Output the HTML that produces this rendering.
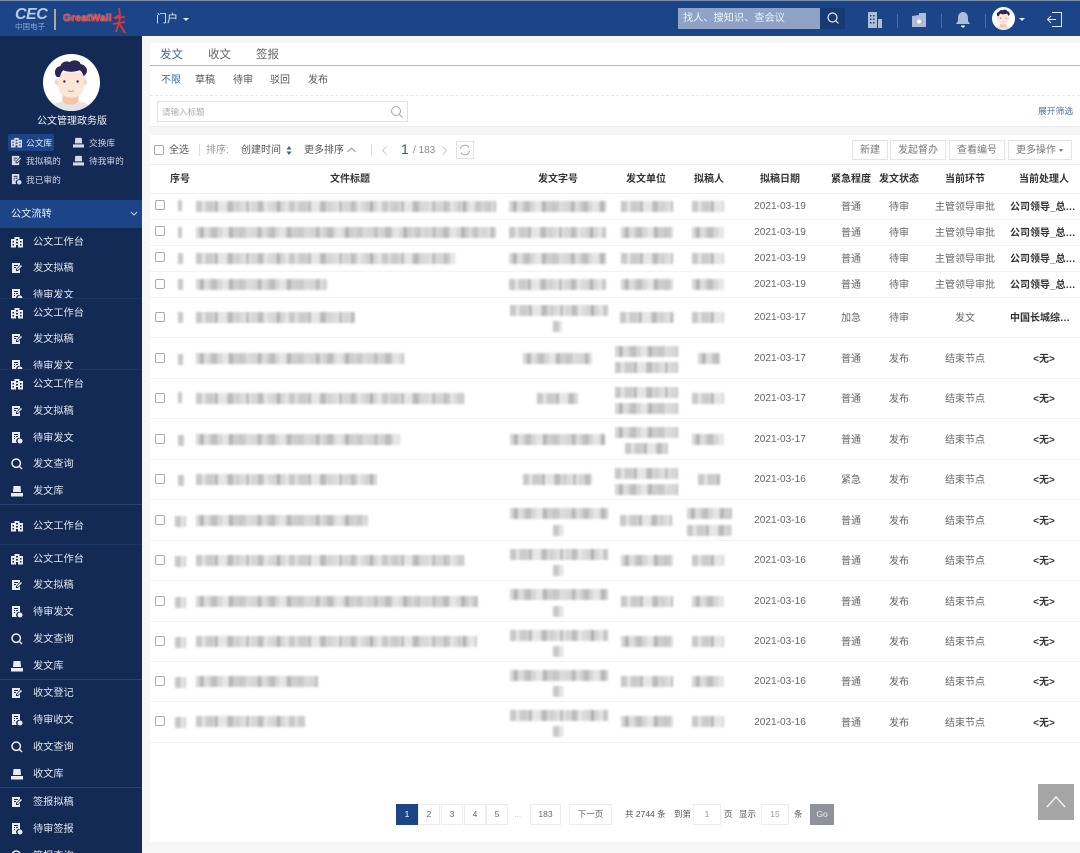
<!DOCTYPE html>
<html lang="zh"><head><meta charset="utf-8"><title>公文管理</title>
<style>
*{box-sizing:border-box}
html,body{margin:0;padding:0}
body{width:1080px;height:853px;position:relative;overflow:hidden;background:#f6f6f6;font-family:"Liberation Sans","Noto Sans CJK SC",sans-serif;font-size:10px;color:#444}
.a{position:absolute;white-space:nowrap}
#hd{position:absolute;left:0;top:0;width:1080px;height:36px;background:#1c4587;border-top:1px solid #7d8fae;z-index:3}
#sb{position:absolute;left:0;top:36px;width:142px;height:817px;background:#132a55;overflow:hidden;color:#e3e8f0}
.sec{position:absolute;left:0;width:142px;overflow:hidden;border-top:1px solid #1a3564}
.it{position:absolute;left:33px;font-size:10.2px;line-height:14px;color:#dfe5ee;white-space:nowrap;margin-top:1px}
.ic{position:absolute;left:11px;width:12px;height:12px;fill:#e9edf3}
.m2 .it{margin-top:2px}
.m2 .ic{margin-top:1px}
.q{position:absolute;font-size:8.7px;line-height:12px;color:#c9d2e0;white-space:nowrap}
.qi{position:absolute;width:11px;height:11px;fill:#d5dbe6}
.pn{position:absolute;background:#fff}
.r{position:absolute;left:150px;width:930px;border-bottom:1px solid #f3f3f3;background:#fff}
.c{position:absolute;top:-1px;bottom:1px;display:flex;align-items:center;justify-content:center;font-size:10px;color:#666;white-space:nowrap}
.d{left:595px;width:70px;font-size:10.1px;top:0;bottom:0}
.u{left:681px;width:40px}
.s{left:729px;width:40px}
.n{left:775px;width:80px}
.p{left:860px;width:70px;justify-content:flex-start;font-weight:bold;color:#333}
.w{left:879px;width:30px;justify-content:center;font-weight:bold;color:#333}
.cb{position:absolute;left:155px;width:10px;height:10px;border:1px solid #aaa;border-radius:2px;background:#fff}
.b{position:absolute;height:11px;filter:blur(1.1px);background-color:#e6e6e6;background-image:repeating-linear-gradient(90deg,rgba(0,0,0,.13) 0 6px,transparent 6px 10px,rgba(0,0,0,.05) 10px 17px,transparent 17px 19px,rgba(0,0,0,.19) 19px 22px,transparent 22px 31px),repeating-linear-gradient(90deg,transparent 0 9px,rgba(0,0,0,.07) 9px 20px,transparent 20px 23px)}
.b2{background-image:repeating-linear-gradient(90deg,transparent 0 4px,rgba(0,0,0,.17) 4px 8px,rgba(0,0,0,.04) 8px 15px,rgba(0,0,0,.12) 15px 21px,transparent 21px 29px),repeating-linear-gradient(90deg,rgba(0,0,0,.07) 0 7px,transparent 7px 13px,rgba(0,0,0,.05) 13px 19px)}
.th{position:absolute;top:165px;height:29px;line-height:29px;font-size:10px;font-weight:bold;color:#333;text-align:center;white-space:nowrap}
.btn{position:absolute;top:140px;height:20px;line-height:19px;border:1px solid #e4e4e4;background:#fff;color:#777;text-align:center;font-size:10px;white-space:nowrap}
.pg{position:absolute;top:804px;height:21px;line-height:19px;border:1px solid #ececec;background:#fff;color:#666;text-align:center;font-size:8.5px;white-space:nowrap}
.t9{position:absolute;top:804px;line-height:21px;font-size:8.5px;color:#555;white-space:nowrap}
</style></head><body>
<svg width="0" height="0" style="position:absolute"><defs>
<symbol id="i1" viewBox="0 0 12 12"><path d="M0 3h3.500V1h5v2H12v8.500H0zM1.500 5v1.500H3V5zm0 3v1.500H3V8zM5 3v1.500h2V3zm0 3v1.500h2V6zM9 5v1.500h1.500V5zm0 3v1.500h1.500V8zM5 9v2.500h2V9z" fill-rule="evenodd"/></symbol>
<symbol id="i2" viewBox="0 0 12 12"><path d="M1 1h8v2L5 7v2h2l2-2v4H1zM3 3v1h4V3zM3 5v1h2V5zM6 8V7l4-4 1 1-4 4z" fill-rule="evenodd"/></symbol>
<symbol id="i3" viewBox="0 0 12 12"><path d="M1 0h8v6a3 3 0 0 0-3 5H1zM3 2v1h4V2zM3 4v1h1V4zm2 0v1h2V4zM3 6v1h1V6z" fill-rule="evenodd"/><circle cx="9" cy="9" r="2.500"/></symbol>
<symbol id="i4" viewBox="0 0 12 12"><path d="M5.200 1a4.200 4.200 0 1 1 0 8.400a4.200 4.200 0 0 1 0-8.400zM8 8l3 3" fill="none" stroke="#e9edf3" stroke-width="1.500"/></symbol>
<symbol id="i5" viewBox="0 0 12 12"><path d="M2.500 1h7l.5 6H2zM0 8h12v3.500H0z"/></symbol>
<symbol id="av" viewBox="0 0 56 56"><circle cx="28" cy="28" r="28" fill="#fff"/><clipPath id="cp"><circle cx="28" cy="28" r="28"/></clipPath><g clip-path="url(#cp)"><path d="M4 56c1-7 13-10 23-10s22 3 23 10z" fill="#e4e4e4"/><path d="M19 36h16v10c-2 5-14 5-16 0z" fill="#f7c3a8"/><circle cx="14.500" cy="27.500" r="3.200" fill="#fbd3c0"/><circle cx="40" cy="27.500" r="3.200" fill="#fbd3c0"/><path d="M15 18h25v13c0 8-6 12-12.500 12S15 39 15 31z" fill="#fde5d8"/><path d="M13 22c-3-5 0-10 4-10 1-4 6-6 9-4 4-3 10-2 11 2 5 1 7 5 6 8-1 2-2 3-3 4-1-3-2-5-4-6-5 2-12 2-16 0-2 2-3 4-3 6-2 1-3 1-4 0z" fill="#2a2656"/><circle cx="21" cy="27" r="1.200" fill="#33305a"/><circle cx="34" cy="27" r="1.200" fill="#33305a"/><path d="M24.500 36c2 1 4 1 6 0" stroke="#e58d78" fill="none"/></g></symbol>
</defs></svg>

<div id="hd">
 <div class="a" style="left:15px;top:6px;font:italic bold 16px 'Liberation Sans';color:#b9cae6;letter-spacing:-.5px;line-height:16px">CEC</div>
 <div class="a" style="left:15px;top:21px;font-size:7.500px;line-height:9px;color:#8ea6cc">中国电子</div>
 <div class="a" style="left:54px;top:8px;width:2px;height:21px;background:#b9a58e"></div>
 <div class="a" style="left:63px;top:11px;font:bold 10.500px 'Liberation Sans';color:#e5403f;line-height:13px;text-shadow:0 0 1px #fff">GreatWall</div>
 <svg class="a" style="left:112px;top:6px" width="15" height="27" viewBox="0 0 15 27"><path d="M7 1l1 7-6 3 11-1M8 9l-1 7M1 17l12-2M4 25l3-9 6 10" fill="none" stroke="#d8393a" stroke-width="1.800"/></svg>
 <div class="a" style="left:156px;top:11px;font-size:11px;line-height:14px;color:#e8edf5">门户</div>
 <div class="a" style="left:183px;top:17px;border:3px solid transparent;border-top:3.500px solid #e8edf5;border-bottom:0"></div>
 <div class="a" style="left:678px;top:7px;width:142px;height:21px;background:#8ea3c6;color:#eef2f8;font-size:10.200px;line-height:21px;padding-left:5px">找人、搜知识、查会议</div>
 <div class="a" style="left:820px;top:7px;width:25px;height:21px;background:#173a72"></div>
 <svg class="a" style="left:826px;top:10px" width="14" height="14" viewBox="0 0 14 14"><circle cx="6.500" cy="6.500" r="4.500" fill="none" stroke="#e6ebf3" stroke-width="1.200"/><path d="M10 10l2.500 2.500" stroke="#e6ebf3" stroke-width="1.200"/></svg>
 <svg class="a" style="left:867px;top:11px" width="16" height="16" viewBox="0 0 16 16"><path d="M1 0h9v16H1zM11 7h4v9h-4z" fill="#aebcd6"/><path d="M3 3h1.500v1.500H3zm3 0h1.500v1.500H6zM3 6.500h1.500V8H3zm3 0h1.500V8H6zM3 10h1.500v1.500H3zm3 0h1.500v1.500H6z" fill="#1c4587"/></svg>
 <div class="a" style="left:897px;top:13px;width:1px;height:14px;background:#4a6aa0"></div>
 <svg class="a" style="left:911px;top:11px" width="16" height="16" viewBox="0 0 16 16"><path d="M1 4l7-1V1h7v14H1z" fill="#aebcd6"/><circle cx="8" cy="9.500" r="2" fill="#fff"/></svg>
 <div class="a" style="left:941px;top:13px;width:1px;height:14px;background:#4a6aa0"></div>
 <svg class="a" style="left:955px;top:10px" width="16" height="17" viewBox="0 0 16 17"><path d="M8 1c3.500 0 5 3 5 6v3l2 3H1l2-3V7c0-3 1.500-6 5-6z" fill="#aebcd6"/><path d="M6 14.500h4c0 1-1 2-2 2s-2-1-2-2z" fill="#fff"/></svg>
 <div class="a" style="left:985px;top:13px;width:1px;height:14px;background:#4a6aa0"></div>
 <svg class="a" style="left:992px;top:6px" width="23" height="23"><use href="#av"/></svg>
 <div class="a" style="left:1019px;top:17px;border:3px solid transparent;border-top:3.500px solid #e8edf5;border-bottom:0"></div>
 <svg class="a" style="left:1046px;top:10px" width="17" height="17" viewBox="0 0 17 17"><path d="M6 1.500h9.500v14H6M10 8.500H1.500M5 5L1.500 8.500 5 12" fill="none" stroke="#dfe6f1" stroke-width="1"/></svg>
</div>

<div id="sb">
 <svg class="a" style="left:43px;top:18px" width="57" height="57"><use href="#av"/></svg>
 <div class="a" style="left:37px;top:78px;font-size:10px;line-height:14px;color:#eef1f6;margin-top:1px">公文管理政务版</div>
 <div class="a" style="left:8px;top:98px;width:46px;height:17px;background:#1c4587;border-radius:2px"></div>
 <svg class="qi" style="left:11px;top:101px"><use href="#i1"/></svg><div class="q" style="left:26px;top:101px;color:#e6ebf3">公文库</div>
 <svg class="qi" style="left:73px;top:101px"><use href="#i5"/></svg><div class="q" style="left:89px;top:101px">交换库</div>
 <svg class="qi" style="left:11px;top:119px"><use href="#i2"/></svg><div class="q" style="left:26px;top:119px">我拟稿的</div>
 <svg class="qi" style="left:73px;top:119px"><use href="#i5"/></svg><div class="q" style="left:89px;top:119px">待我审的</div>
 <svg class="qi" style="left:11px;top:138px"><use href="#i3"/></svg><div class="q" style="left:26px;top:138px">我已审的</div>
 <div class="a" style="left:0;top:164px;width:142px;height:28px;background:#1c4587;color:#e9edf4;font-size:10.200px;line-height:29px;padding-left:11px">公文流转</div>
 <svg class="a" style="left:130px;top:175px" width="8" height="6" viewBox="0 0 8 6"><path d="M1 1l3 3 3-3" fill="none" stroke="#c9d4e6"/></svg>

 <div class="sec m2" style="top:192px;height:71px;border:0">
  <svg class="ic" style="top:7px"><use href="#i1"/></svg><div class="it" style="top:6px">公文工作台</div>
  <svg class="ic" style="top:33px"><use href="#i2"/></svg><div class="it" style="top:32px">发文拟稿</div>
  <svg class="ic" style="top:60px"><use href="#i3"/></svg><div class="it" style="top:59px">待审发文</div>
 </div>
 <div class="sec m2" style="top:262px;height:71px">
  <svg class="ic" style="top:7px"><use href="#i1"/></svg><div class="it" style="top:6px">公文工作台</div>
  <svg class="ic" style="top:33px"><use href="#i2"/></svg><div class="it" style="top:32px">发文拟稿</div>
  <svg class="ic" style="top:60px"><use href="#i3"/></svg><div class="it" style="top:59px">待审发文</div>
 </div>
 <div class="sec" style="top:333px;height:135px">
  <svg class="ic" style="top:8px"><use href="#i1"/></svg><div class="it" style="top:7px">公文工作台</div>
  <svg class="ic" style="top:35px"><use href="#i2"/></svg><div class="it" style="top:34px">发文拟稿</div>
  <svg class="ic" style="top:62px"><use href="#i3"/></svg><div class="it" style="top:61px">待审发文</div>
  <svg class="ic" style="top:88px"><use href="#i4"/></svg><div class="it" style="top:87px">发文查询</div>
  <svg class="ic" style="top:115px"><use href="#i5"/></svg><div class="it" style="top:114px">发文库</div>
 </div>
 <div class="sec" style="top:468px;height:40px;border-top:1px solid #2a4270">
  <svg class="ic" style="top:15px"><use href="#i1"/></svg><div class="it" style="top:14px">公文工作台</div>
 </div>
 <div class="sec" style="top:508px;height:135px">
  <svg class="ic" style="top:8px"><use href="#i1"/></svg><div class="it" style="top:7px">公文工作台</div>
  <svg class="ic" style="top:34px"><use href="#i2"/></svg><div class="it" style="top:33px">发文拟稿</div>
  <svg class="ic" style="top:61px"><use href="#i3"/></svg><div class="it" style="top:60px">待审发文</div>
  <svg class="ic" style="top:88px"><use href="#i4"/></svg><div class="it" style="top:87px">发文查询</div>
  <svg class="ic" style="top:115px"><use href="#i5"/></svg><div class="it" style="top:114px">发文库</div>
 </div>
 <div class="sec" style="top:643px;height:108px;border-top:1px solid #2a4270">
  <svg class="ic" style="top:7px"><use href="#i2"/></svg><div class="it" style="top:6px">收文登记</div>
  <svg class="ic" style="top:34px"><use href="#i3"/></svg><div class="it" style="top:33px">待审收文</div>
  <svg class="ic" style="top:61px"><use href="#i4"/></svg><div class="it" style="top:60px">收文查询</div>
  <svg class="ic" style="top:88px"><use href="#i5"/></svg><div class="it" style="top:87px">收文库</div>
 </div>
 <div class="sec m2" style="top:751px;height:66px;border-top:1px solid #2a4270">
  <svg class="ic" style="top:7px"><use href="#i2"/></svg><div class="it" style="top:6px">签报拟稿</div>
  <svg class="ic" style="top:34px"><use href="#i3"/></svg><div class="it" style="top:33px">待审签报</div>
  <svg class="ic" style="top:61px"><use href="#i4"/></svg><div class="it" style="top:60px">签报查询</div>
 </div>
</div>

<div class="pn" style="left:150px;top:43px;width:930px;height:84px;border-bottom:1px solid #ececec"></div>
<div class="a" style="left:160px;top:48px;font-size:11.500px;line-height:15px;color:#3d6aa5">发文</div>
<div class="a" style="left:208px;top:48px;font-size:11.500px;line-height:15px;color:#666">收文</div>
<div class="a" style="left:256px;top:48px;font-size:11.500px;line-height:15px;color:#666">签报</div>
<div class="a" style="left:150px;top:65px;width:930px;height:1px;background:#a9b8d0"></div>
<div class="a" style="left:161px;top:74px;font-size:10px;line-height:14px;color:#3d6aa5">不限</div>
<div class="a" style="left:195px;top:74px;font-size:10px;line-height:14px;color:#555">草稿</div>
<div class="a" style="left:233px;top:74px;font-size:10px;line-height:14px;color:#555">待审</div>
<div class="a" style="left:270px;top:74px;font-size:10px;line-height:14px;color:#555">驳回</div>
<div class="a" style="left:308px;top:74px;font-size:10px;line-height:14px;color:#555">发布</div>
<div class="a" style="left:150px;top:95px;width:930px;border-top:1px dashed #e8e8e8"></div>
<div class="a" style="left:157px;top:101px;width:251px;height:21px;border:1px solid #e2e2e2;background:#fff;color:#aaa;font-size:8.500px;line-height:20px;padding-left:4px">请输入标题</div>
<svg class="a" style="left:390px;top:105px" width="14" height="14" viewBox="0 0 14 14"><circle cx="6" cy="6" r="4.500" fill="none" stroke="#aaa"/><path d="M9.500 9.500l3 3" stroke="#aaa"/></svg>
<div class="a" style="left:1038px;top:105px;font-size:8.800px;line-height:12px;color:#54719f">展开筛选</div>

<div class="pn" style="left:150px;top:135px;width:930px;height:707px"></div>
<div class="a" style="left:150px;top:164px;width:930px;height:1px;background:#eee"></div>
<div class="cb" style="left:154px;top:145px"></div>
<div class="a" style="left:169px;top:143px;font-size:10px;line-height:14px;color:#555;margin-top:1px">全选</div>
<div class="a" style="left:199px;top:144px;width:1px;height:12px;background:#ddd"></div>
<div class="a" style="left:206px;top:143px;font-size:10px;line-height:14px;color:#999;margin-top:1px">排序:</div>
<div class="a" style="left:241px;top:143px;font-size:10px;line-height:14px;color:#555;margin-top:1px">创建时间</div>
<svg class="a" style="left:286px;top:146px" width="6" height="9" viewBox="0 0 6 9"><path d="M3 0l2.500 3.500h-5zM3 9L.5 5.500h5z" fill="#3d5f96"/></svg>
<div class="a" style="left:304px;top:143px;font-size:10px;line-height:14px;color:#555;margin-top:1px">更多排序</div>
<svg class="a" style="left:347px;top:147px" width="9" height="6" viewBox="0 0 9 6"><path d="M.5 5l4-4 4 4" fill="none" stroke="#999"/></svg>
<div class="a" style="left:371px;top:144px;width:1px;height:12px;background:#ddd"></div>
<svg class="a" style="left:382px;top:146px" width="5" height="9" viewBox="0 0 5 9"><path d="M4.500.5l-4 4 4 4" fill="none" stroke="#ccc"/></svg>
<div class="a" style="left:401px;top:141px;font-size:14px;line-height:17px;color:#2c5592">1</div>
<div class="a" style="left:413px;top:144px;font-size:10px;line-height:14px;color:#888">/ 183</div>
<svg class="a" style="left:442px;top:146px" width="5" height="9" viewBox="0 0 5 9"><path d="M.5.5l4 4-4 4" fill="none" stroke="#ccc"/></svg>
<div class="a" style="left:456px;top:141px;width:18px;height:18px;border:1px solid #e2e2e2;background:#fff"></div>
<svg class="a" style="left:459px;top:144px" width="12" height="12" viewBox="0 0 12 12"><path d="M1.500 5a4.600 4.600 0 0 1 8.500-1.500M10.500 7a4.600 4.600 0 0 1-8.500 1.500" fill="none" stroke="#aaa"/></svg>
<div class="btn" style="left:852px;width:36px">新建</div>
<div class="btn" style="left:890px;width:56px">发起督办</div>
<div class="btn" style="left:949px;width:56px">查看编号</div>
<div class="btn" style="left:1008px;width:64px;text-align:left;padding-left:7px">更多操作</div>
<div class="a" style="left:1059px;top:149px;border:2.500px solid transparent;border-top:3px solid #777;border-bottom:0"></div>

<div class="r" style="top:165px;height:29px;background:none;border-bottom:1px solid #eee"></div>
<div class="th" style="left:160px;width:40px">序号</div>
<div class="th" style="left:320px;width:60px">文件标题</div>
<div class="th" style="left:528px;width:60px">发文字号</div>
<div class="th" style="left:616px;width:60px">发文单位</div>
<div class="th" style="left:684px;width:50px">拟稿人</div>
<div class="th" style="left:750px;width:60px">拟稿日期</div>
<div class="th" style="left:821px;width:60px">紧急程度</div>
<div class="th" style="left:869px;width:60px">发文状态</div>
<div class="th" style="left:935px;width:60px">当前环节</div>
<div class="th" style="left:1014px;width:60px">当前处理人</div>

<div class="r" style="top:194px;height:26px"><div class="c d">2021-03-19</div><div class="c u">普通</div><div class="c s">待审</div><div class="c n">主管领导审批</div><div class="c p">公司领导_总…</div></div>
<div class="r" style="top:220px;height:26px"><div class="c d">2021-03-19</div><div class="c u">普通</div><div class="c s">待审</div><div class="c n">主管领导审批</div><div class="c p">公司领导_总…</div></div>
<div class="r" style="top:246px;height:26px"><div class="c d">2021-03-19</div><div class="c u">普通</div><div class="c s">待审</div><div class="c n">主管领导审批</div><div class="c p">公司领导_总…</div></div>
<div class="r" style="top:272px;height:26px"><div class="c d">2021-03-19</div><div class="c u">普通</div><div class="c s">待审</div><div class="c n">主管领导审批</div><div class="c p">公司领导_总…</div></div>
<div class="r" style="top:298px;height:40px"><div class="c d">2021-03-17</div><div class="c u">加急</div><div class="c s">待审</div><div class="c n">发文</div><div class="c p">中国长城综…</div></div>
<div class="r" style="top:338px;height:41px"><div class="c d">2021-03-17</div><div class="c u">普通</div><div class="c s">发布</div><div class="c n">结束节点</div><div class="c w">&lt;无&gt;</div></div>
<div class="r" style="top:379px;height:40px"><div class="c d">2021-03-17</div><div class="c u">普通</div><div class="c s">发布</div><div class="c n">结束节点</div><div class="c w">&lt;无&gt;</div></div>
<div class="r" style="top:419px;height:41px"><div class="c d">2021-03-17</div><div class="c u">普通</div><div class="c s">发布</div><div class="c n">结束节点</div><div class="c w">&lt;无&gt;</div></div>
<div class="r" style="top:460px;height:40px"><div class="c d">2021-03-16</div><div class="c u">紧急</div><div class="c s">发布</div><div class="c n">结束节点</div><div class="c w">&lt;无&gt;</div></div>
<div class="r" style="top:500px;height:41px"><div class="c d">2021-03-16</div><div class="c u">普通</div><div class="c s">发布</div><div class="c n">结束节点</div><div class="c w">&lt;无&gt;</div></div>
<div class="r" style="top:541px;height:40px"><div class="c d">2021-03-16</div><div class="c u">普通</div><div class="c s">发布</div><div class="c n">结束节点</div><div class="c w">&lt;无&gt;</div></div>
<div class="r" style="top:581px;height:41px"><div class="c d">2021-03-16</div><div class="c u">普通</div><div class="c s">发布</div><div class="c n">结束节点</div><div class="c w">&lt;无&gt;</div></div>
<div class="r" style="top:622px;height:40px"><div class="c d">2021-03-16</div><div class="c u">普通</div><div class="c s">发布</div><div class="c n">结束节点</div><div class="c w">&lt;无&gt;</div></div>
<div class="r" style="top:662px;height:40px"><div class="c d">2021-03-16</div><div class="c u">普通</div><div class="c s">发布</div><div class="c n">结束节点</div><div class="c w">&lt;无&gt;</div></div>
<div class="r" style="top:702px;height:41px"><div class="c d">2021-03-16</div><div class="c u">普通</div><div class="c s">发布</div><div class="c n">结束节点</div><div class="c w">&lt;无&gt;</div></div>

<div class="cb" style="top:200px"></div><div class="cb" style="top:226px"></div><div class="cb" style="top:252px"></div><div class="cb" style="top:279px"></div><div class="cb" style="top:312px"></div><div class="cb" style="top:353px"></div><div class="cb" style="top:393px"></div><div class="cb" style="top:434px"></div><div class="cb" style="top:474px"></div><div class="cb" style="top:515px"></div><div class="cb" style="top:555px"></div><div class="cb" style="top:596px"></div><div class="cb" style="top:636px"></div><div class="cb" style="top:676px"></div><div class="cb" style="top:716px"></div>

<!-- sequence -->
<div class="b" style="left:178px;top:200px;width:4px"></div><div class="b" style="left:178px;top:227px;width:4px"></div><div class="b" style="left:178px;top:253px;width:5px"></div><div class="b" style="left:178px;top:279px;width:5px"></div><div class="b" style="left:178px;top:312px;width:5px"></div><div class="b" style="left:178px;top:354px;width:5px"></div><div class="b" style="left:178px;top:392px;width:4px"></div><div class="b" style="left:178px;top:435px;width:6px"></div><div class="b" style="left:178px;top:475px;width:6px"></div><div class="b" style="left:175px;top:516px;width:11px"></div><div class="b" style="left:175px;top:556px;width:11px"></div><div class="b" style="left:175px;top:597px;width:11px"></div><div class="b" style="left:175px;top:637px;width:11px"></div><div class="b" style="left:175px;top:677px;width:11px"></div><div class="b" style="left:175px;top:717px;width:11px"></div>
<!-- titles -->
<div class="b" style="left:196px;top:201px;width:300px"></div><div class="b b2" style="left:196px;top:227px;width:300px"></div><div class="b" style="left:196px;top:253px;width:259px"></div><div class="b b2" style="left:196px;top:279px;width:131px"></div><div class="b" style="left:196px;top:312px;width:159px"></div><div class="b b2" style="left:196px;top:353px;width:208px"></div><div class="b" style="left:196px;top:393px;width:268px"></div><div class="b b2" style="left:196px;top:434px;width:204px"></div><div class="b" style="left:196px;top:474px;width:181px"></div><div class="b b2" style="left:196px;top:515px;width:172px"></div><div class="b" style="left:196px;top:555px;width:268px"></div><div class="b b2" style="left:196px;top:596px;width:282px"></div><div class="b" style="left:196px;top:636px;width:281px"></div><div class="b b2" style="left:196px;top:676px;width:122px"></div><div class="b" style="left:196px;top:716px;width:109px"></div>
<!-- doc no -->
<div class="b b2" style="left:509px;top:201px;width:97px"></div><div class="b" style="left:509px;top:227px;width:97px"></div><div class="b b2" style="left:509px;top:253px;width:97px"></div><div class="b" style="left:509px;top:279px;width:97px"></div>
<div class="b" style="left:510px;top:305px;width:98px"></div><div class="b" style="left:553px;top:321px;width:9px"></div>
<div class="b b2" style="left:523px;top:353px;width:69px"></div><div class="b" style="left:537px;top:393px;width:41px"></div>
<div class="b b2" style="left:510px;top:434px;width:95px"></div><div class="b" style="left:523px;top:474px;width:69px"></div>
<div class="b b2" style="left:510px;top:508px;width:98px"></div><div class="b" style="left:553px;top:525px;width:10px"></div>
<div class="b" style="left:510px;top:549px;width:98px"></div><div class="b" style="left:553px;top:565px;width:10px"></div>
<div class="b b2" style="left:510px;top:589px;width:98px"></div><div class="b" style="left:553px;top:606px;width:10px"></div>
<div class="b" style="left:510px;top:630px;width:98px"></div><div class="b" style="left:553px;top:646px;width:10px"></div>
<div class="b b2" style="left:510px;top:670px;width:98px"></div><div class="b" style="left:553px;top:686px;width:10px"></div>
<div class="b" style="left:510px;top:710px;width:98px"></div><div class="b" style="left:553px;top:726px;width:10px"></div>
<!-- units -->
<div class="b" style="left:621px;top:201px;width:52px"></div><div class="b b2" style="left:621px;top:227px;width:52px"></div><div class="b" style="left:621px;top:253px;width:52px"></div><div class="b b2" style="left:621px;top:279px;width:52px"></div><div class="b" style="left:620px;top:312px;width:54px"></div>
<div class="b b2" style="left:615px;top:346px;width:63px"></div><div class="b" style="left:615px;top:362px;width:63px"></div>
<div class="b" style="left:615px;top:387px;width:63px"></div><div class="b b2" style="left:615px;top:403px;width:63px"></div>
<div class="b b2" style="left:615px;top:427px;width:63px"></div><div class="b" style="left:625px;top:443px;width:43px"></div>
<div class="b" style="left:615px;top:468px;width:63px"></div><div class="b b2" style="left:615px;top:484px;width:63px"></div>
<div class="b" style="left:620px;top:515px;width:52px"></div><div class="b b2" style="left:621px;top:555px;width:52px"></div><div class="b" style="left:621px;top:596px;width:52px"></div><div class="b b2" style="left:621px;top:636px;width:52px"></div><div class="b" style="left:621px;top:676px;width:52px"></div><div class="b b2" style="left:621px;top:716px;width:52px"></div>
<!-- persons -->
<div class="b" style="left:692px;top:201px;width:32px"></div><div class="b b2" style="left:692px;top:227px;width:32px"></div><div class="b" style="left:692px;top:253px;width:32px"></div><div class="b b2" style="left:692px;top:279px;width:32px"></div><div class="b" style="left:692px;top:312px;width:32px"></div><div class="b b2" style="left:698px;top:353px;width:22px"></div><div class="b" style="left:692px;top:393px;width:32px"></div><div class="b b2" style="left:692px;top:434px;width:32px"></div><div class="b" style="left:698px;top:474px;width:22px"></div><div class="b b2" style="left:687px;top:508px;width:45px"></div><div class="b" style="left:687px;top:525px;width:45px"></div><div class="b" style="left:692px;top:555px;width:32px"></div><div class="b b2" style="left:692px;top:596px;width:32px"></div><div class="b" style="left:692px;top:636px;width:32px"></div><div class="b b2" style="left:692px;top:676px;width:32px"></div><div class="b" style="left:692px;top:716px;width:32px"></div>

<!-- pagination -->
<div class="pg" style="left:396px;width:22px;background:#1c4587;border-color:#1c4587;color:#fff">1</div>
<div class="pg" style="left:418px;width:22px">2</div>
<div class="pg" style="left:441px;width:22px">3</div>
<div class="pg" style="left:464px;width:22px">4</div>
<div class="pg" style="left:486px;width:22px">5</div>
<div class="t9" style="left:514px;color:#bbb">...</div>
<div class="pg" style="left:530px;width:31px">183</div>
<div class="pg" style="left:569px;width:43px">下一页</div>
<div class="t9" style="left:625px">共 2744 条</div>
<div class="t9" style="left:674px">到第</div>
<div class="pg" style="left:693px;width:28px;color:#999">1</div>
<div class="t9" style="left:724px">页</div>
<div class="t9" style="left:739px">显示</div>
<div class="pg" style="left:761px;width:28px;color:#999">15</div>
<div class="t9" style="left:794px">条</div>
<div class="pg" style="left:810px;width:24px;background:#8f9299;border-color:#8f9299;color:#eee">Go</div>
<div class="a" style="left:1038px;top:784px;width:36px;height:36px;background:#a5a5a5"></div>
<svg class="a" style="left:1046px;top:795px" width="20" height="13" viewBox="0 0 20 13"><path d="M1 12l9-10 9 10" fill="none" stroke="#f2f2f2" stroke-width="1.500"/></svg>
</body></html>
